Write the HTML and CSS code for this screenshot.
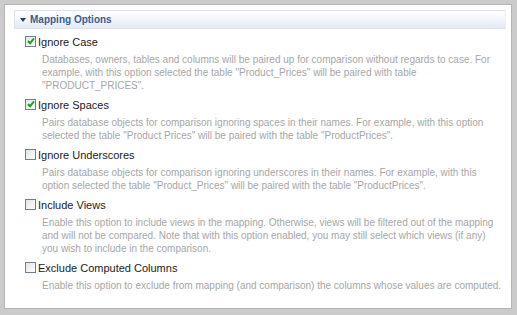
FILE: index.html
```html
<!DOCTYPE html>
<html lang="en">
<head>
  <meta charset="UTF-8">
  <title>Mapping Options</title>
  <link rel="stylesheet" href="styles.css">
</head>
<body>

  <div class="panel">
    <div class="section-header">
      <span class="arrow"></span>
      <span class="section-title">Mapping Options</span>
    </div>

    <div class="options">
      <div class="option">
        <label class="option-label">
          <span class="check checked"></span>Ignore Case
        </label>
        <p class="desc">Databases, owners, tables and columns will be paired up for comparison without regards to case. For<br>
          example, with this option selected the table "Product_Prices" will be paired with table<br>
          "PRODUCT_PRICES".</p>
      </div>

      <div class="option">
        <label class="option-label">
          <span class="check checked"></span>Ignore Spaces
        </label>
        <p class="desc">Pairs database objects for comparison ignoring spaces in their names. For example, with this option<br>
          selected the table "Product Prices" will be paired with the table "ProductPrices".</p>
      </div>

      <div class="option">
        <label class="option-label">
          <span class="check"></span>Ignore Underscores
        </label>
        <p class="desc">Pairs database objects for comparison ignoring underscores in their names. For example, with this<br>
          option selected the table "Product_Prices" will be paired with the table "ProductPrices".</p>
      </div>

      <div class="option">
        <label class="option-label">
          <span class="check"></span>Include Views
        </label>
        <p class="desc">Enable this option to include views in the mapping. Otherwise, views will be filtered out of the mapping<br>
          and will not be compared. Note that with this option enabled, you may still select which views (if any)<br>
          you wish to include in the comparison.</p>
      </div>

      <div class="option">
        <label class="option-label">
          <span class="check"></span>Exclude Computed Columns
        </label>
        <p class="desc">Enable this option to exclude from mapping (and comparison) the columns whose values are computed.</p>
      </div>
    </div>
  </div>

</body>
</html>
```

FILE: styles.css
```css
body {
  margin: 0;
  background-color: #cbcbcb;
  font-family: "Liberation Sans", Arial, sans-serif;
  font-size: 11px;
}

.panel {
  margin: 4px 5px 0 4px;
  height: 305px;
  box-sizing: border-box;
  border: 1px solid #b5b5b5;
  background-color: #fff;
  padding: 5px 5px 0 9px;
}

.section-header {
  display: flex;
  align-items: center;
  height: 17px;
  border: 1px solid #dde4ee;
  border-right-color: #edf1f6;
  background: linear-gradient(to bottom, #ffffff, #e4ebf5);
  padding-left: 5px;
}

.arrow {
  width: 0;
  height: 0;
  border-left: 3px solid transparent;
  border-right: 3px solid transparent;
  border-top: 4px solid #26416a;
  margin-right: 4px;
}

.section-title {
  color: #3a5c8e;
  font-weight: bold;
  font-size: 10px;
}

.options {
  padding: 5px 0 0 11px;
}

.option {
  margin-bottom: 5px;
}

.option-label {
  display: flex;
  align-items: center;
  height: 15px;
  color: #1a1a1a;
}

.check {
  width: 9px;
  height: 9px;
  border: 1px solid #6d7f98;
  background: linear-gradient(135deg, #e4e4e0, #ffffff);
  margin-right: 2px;
  position: relative;
}

.check.checked::after {
  content: "";
  position: absolute;
  left: 3px;
  top: 0px;
  width: 2px;
  height: 5px;
  border: solid #22a022;
  border-width: 0 2px 2px 0;
  transform: rotate(40deg);
}

.desc {
  margin: 4px 0 0 17px;
  white-space: nowrap;
  color: #a6a6a6;
  font-size: 10px;
  line-height: 13px;
}
```
